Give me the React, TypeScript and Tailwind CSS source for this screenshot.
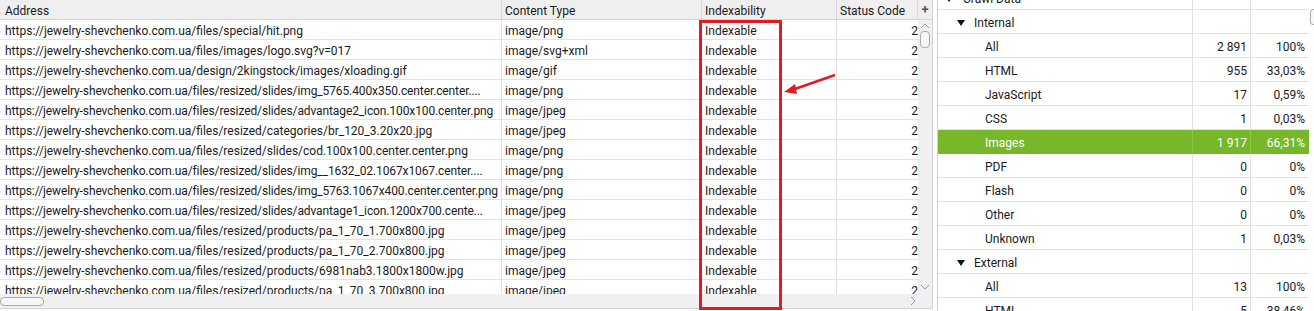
import React from "react";

const urls = [
  ["https://jewelry-shevchenko.com.ua/files/special/hit.png", "image/png"],
  ["https://jewelry-shevchenko.com.ua/files/images/logo.svg?v=017", "image/svg+xml"],
  ["https://jewelry-shevchenko.com.ua/design/2kingstock/images/xloading.gif", "image/gif"],
  ["https://jewelry-shevchenko.com.ua/files/resized/slides/img_5765.400x350.center.center....", "image/png"],
  ["https://jewelry-shevchenko.com.ua/files/resized/slides/advantage2_icon.100x100.center.png", "image/jpeg"],
  ["https://jewelry-shevchenko.com.ua/files/resized/categories/br_120_3.20x20.jpg", "image/jpeg"],
  ["https://jewelry-shevchenko.com.ua/files/resized/slides/cod.100x100.center.center.png", "image/png"],
  ["https://jewelry-shevchenko.com.ua/files/resized/slides/img__1632_02.1067x1067.center....", "image/png"],
  ["https://jewelry-shevchenko.com.ua/files/resized/slides/img_5763.1067x400.center.center.png", "image/png"],
  ["https://jewelry-shevchenko.com.ua/files/resized/slides/advantage1_icon.1200x700.cente...", "image/jpeg"],
  ["https://jewelry-shevchenko.com.ua/files/resized/products/pa_1_70_1.700x800.jpg", "image/jpeg"],
  ["https://jewelry-shevchenko.com.ua/files/resized/products/pa_1_70_2.700x800.jpg", "image/jpeg"],
  ["https://jewelry-shevchenko.com.ua/files/resized/products/6981nab3.1800x1800w.jpg", "image/jpeg"],
  ["https://jewelry-shevchenko.com.ua/files/resized/products/pa_1_70_3.700x800.jpg", "image/jpeg"],
];

type TreeRow = { label: string; level: number; count?: string; pct?: string; active?: boolean };

const tree: TreeRow[] = [
  { label: "Crawl Data", level: 0 },
  { label: "Internal", level: 1 },
  { label: "All", level: 2, count: "2 891", pct: "100%" },
  { label: "HTML", level: 2, count: "955", pct: "33,03%" },
  { label: "JavaScript", level: 2, count: "17", pct: "0,59%" },
  { label: "CSS", level: 2, count: "1", pct: "0,03%" },
  { label: "Images", level: 2, count: "1 917", pct: "66,31%", active: true },
  { label: "PDF", level: 2, count: "0", pct: "0%" },
  { label: "Flash", level: 2, count: "0", pct: "0%" },
  { label: "Other", level: 2, count: "0", pct: "0%" },
  { label: "Unknown", level: 2, count: "1", pct: "0,03%" },
  { label: "External", level: 1 },
  { label: "All", level: 2, count: "13", pct: "100%" },
  { label: "HTML", level: 2, count: "5", pct: "38,46%" },
];

function Caret() {
  return (
    <svg width="8" height="6" viewBox="0 0 8 6" className="shrink-0">
      <path d="M0 0 L8 0 L4 6 Z" fill="#111" />
    </svg>
  );
}

function UrlTable() {
  return (
    <div className="relative flex h-[309px] w-[933px] shrink-0 flex-col border-r border-b border-[#d4d4d4] bg-white">
      <div className="flex h-[20px] border-b border-[#d4d4d4] bg-[#efefef] leading-[22px] text-[#1a1a1a]">
        <div className="w-[502px] border-r border-[#dadada] pl-[5px]">Address</div>
        <div className="w-[200px] border-r border-[#dadada] pl-[3px]">Content Type</div>
        <div className="w-[135px] border-r border-[#dadada] pl-[3px]">Indexability</div>
        <div className="w-[81px] border-r border-[#dadada] pl-[3px]">Status Code</div>
        <div className="flex w-[14px] items-center justify-center text-[13px] font-bold leading-none text-[#555]">+</div>
      </div>
      <div className="flex h-[274px]">
        <div className="w-[918px] overflow-hidden">
          {urls.map(([u, t], i) => (
            <div key={i} className="flex h-[20px] border-b border-[#e2e2e2] leading-[22px] text-[#1a1a1a]">
              <div
                className={`w-[502px] overflow-hidden whitespace-nowrap border-r border-[#e2e2e2] pl-[5px] ${
                  u.length > 86 ? "tracking-[-0.11px]" : ""
                }`}
              >
                {u}
              </div>
              <div className="w-[200px] border-r border-[#e2e2e2] pl-[3px]">{t}</div>
              <div className="w-[135px] border-r border-[#e2e2e2] pl-[3px]">Indexable</div>
              <div className="w-[81px] text-right">2</div>
            </div>
          ))}
        </div>
        <div className="relative w-[14px] bg-[#f0f0f0]">
          <svg width="10" height="6" viewBox="0 0 10 6" className="absolute left-[2px] top-[3px]">
            <path d="M1 5 L5 1 L9 5" fill="none" stroke="#999" strokeWidth="1" />
          </svg>
          <div className="absolute left-[2px] top-[11px] h-[17px] w-[10px] rounded-[4px] border border-[#aaa] bg-[#f7f7f7]" />
          <svg width="10" height="6" viewBox="0 0 10 6" className="absolute bottom-[4px] left-[2px]">
            <path d="M1 1 L5 5 L9 1" fill="none" stroke="#999" strokeWidth="1" />
          </svg>
        </div>
      </div>
      <div className="relative h-[14px] bg-[#f0f0f0]">
        <div className="absolute left-0 top-[3px] h-[9px] w-[44px] rounded-[4px] border border-[#aaa] bg-[#f7f7f7]" />
        <svg width="6" height="10" viewBox="0 0 6 10" className="absolute left-[910px] top-[2px]">
          <path d="M1 1 L5 5 L1 9" fill="none" stroke="#999" strokeWidth="1" />
        </svg>
      </div>
      <div className="pointer-events-none absolute left-[699px] top-[20px] h-[290px] w-[83px] border-[3px] border-[#e01b22]" />
      <svg width="60" height="30" viewBox="0 0 60 30" className="pointer-events-none absolute left-[780px] top-[70px]">
        <line x1="55" y1="5" x2="12" y2="20" stroke="#e01b22" strokeWidth="2.5" />
        <path d="M4 22 L15 14 L17 24 Z" fill="#e01b22" />
      </svg>
    </div>
  );
}

function OverviewTree() {
  return (
    <div className="flex h-[311px] flex-1 pl-[4px]">
      <div className="h-full w-[372px] overflow-hidden border-l border-[#d4d4d4] bg-white">
        <div className="-mt-[14px]">
          {tree.map((r, i) => {
            const line = r.active ? "border-[#8cc64a]" : "border-[#e2e2e2]";
            return (
              <div
                key={i}
                className={`flex h-[24px] border-b pt-[2px] ${
                  r.active ? "border-[#76b82a] bg-[#76b82a] text-white" : "border-[#e2e2e2] text-[#1a1a1a]"
                }`}
              >
                <div className={`-mt-[2px] flex w-[255px] items-center border-r pt-[2px] ${line}`}>
                  {r.level === 0 && (
                    <div className="flex items-center pl-[7px]">
                      <Caret />
                      <span className="pl-[10px]">{r.label}</span>
                    </div>
                  )}
                  {r.level === 1 && (
                    <div className="flex items-center pl-[19px]">
                      <Caret />
                      <span className="pl-[9px]">{r.label}</span>
                    </div>
                  )}
                  {r.level === 2 && <span className="pl-[47px]">{r.label}</span>}
                </div>
                <div className={`-mt-[2px] flex w-[58px] items-center justify-end border-r pr-[3px] pt-[2px] ${line}`}>
                  {r.count}
                </div>
                <div className="flex w-[57px] items-center justify-end pr-[3px]">{r.pct}</div>
              </div>
            );
          })}
        </div>
      </div>
      <div className="relative w-[5px] bg-white">
        <div className="absolute left-[1px] top-[9px] h-[16px] w-[8px] rounded-[3px] border border-[#aaa] bg-[#f7f7f7]" />
      </div>
    </div>
  );
}

export default function App() {
  return (
    <div className="flex h-[311px] w-[1314px] overflow-hidden bg-white font-['Roboto',sans-serif] text-[12px]">
      <UrlTable />
      <OverviewTree />
    </div>
  );
}
